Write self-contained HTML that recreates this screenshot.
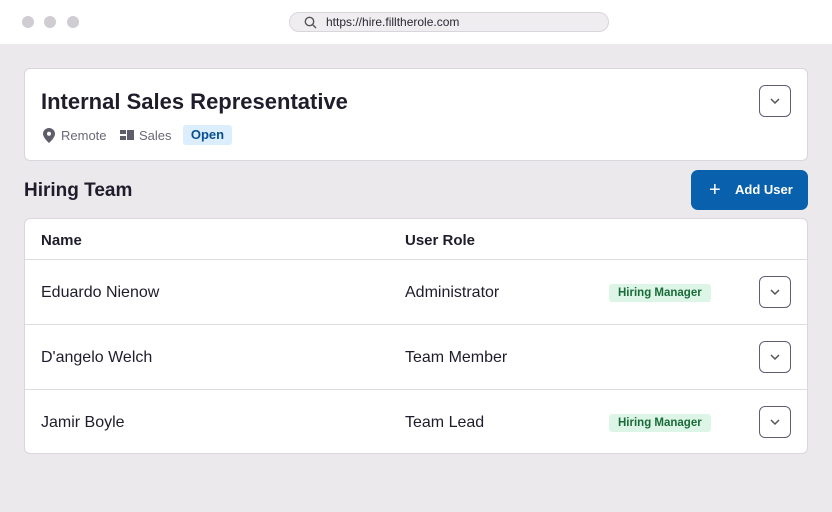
<!DOCTYPE html>
<html><head><style>
*{box-sizing:border-box;margin:0;padding:0}
body{width:832px;height:512px;background:#ebe9ec;font-family:"Liberation Sans",sans-serif;position:relative;overflow:hidden;color:#1f1d2b}
.top{position:absolute;left:0;top:0;width:832px;height:44px;background:#fff}
.dot{position:absolute;top:16px;width:12px;height:12px;border-radius:50%;background:#cfcdd2}
.url{position:absolute;left:289px;top:12px;width:320px;height:20px;border-radius:10px;background:#efedf0;border:1px solid #d8d6da;font-size:12px;color:#2a2833;padding-left:36px;line-height:18px}
.card{position:absolute;background:#fff;border:1px solid #d9d7dc;border-radius:6px}
.chev{position:absolute;width:32px;height:32px;border:1.5px solid #5f5d72;border-radius:6px;background:#fff}
.chev svg{position:absolute;left:9px;top:9px}
.row{position:absolute;left:0;width:783px;height:65px;border-top:1px solid #dedce2;font-size:16px}
.row span{position:absolute;top:24px}
.tag{position:absolute;background:#dcf5e6;color:#1a6b3a;font-size:11.5px;font-weight:bold;border-radius:3px;padding:3px 9px}
</style></head><body>
<div class="top">
<div class="dot" style="left:22px"></div><div class="dot" style="left:44px"></div><div class="dot" style="left:67px"></div>
<div class="url"><svg style="position:absolute;left:14px;top:3px" width="13" height="13" viewBox="0 0 13 13"><circle cx="5.5" cy="5.5" r="4.2" fill="none" stroke="#555" stroke-width="1.4"/><path d="M8.6 8.6L12 12" stroke="#555" stroke-width="1.4"/></svg>https://hire.filltherole.com</div>
</div>
<div class="card" style="left:24px;top:68px;width:784px;height:93px">
<div style="position:absolute;left:16px;top:20px;font-size:22px;font-weight:bold">Internal Sales Representative</div>
<svg style="position:absolute;left:18px;top:59px" width="12" height="15" viewBox="0 0 12 15"><path d="M6 0C2.7 0 0 2.6 0 5.8 0 10 6 15 6 15s6-5 6-9.2C12 2.6 9.3 0 6 0z" fill="#5f5d6a"/><circle cx="6" cy="5.8" r="2" fill="#fff"/></svg>
<span style="position:absolute;left:36px;top:59px;font-size:13px;color:#6b6977">Remote</span>
<svg style="position:absolute;left:95px;top:61px" width="14" height="11"><rect x="0" y="0" width="6" height="4" fill="#5f5d6a"/><rect x="0" y="6" width="6" height="4" fill="#5f5d6a"/><rect x="7" y="0" width="7" height="10" fill="#5f5d6a"/></svg>
<span style="position:absolute;left:114px;top:59px;font-size:13px;color:#6b6977">Sales</span>
<span style="position:absolute;left:158px;top:56px;width:49px;height:20px;background:#dcedfb;border-radius:3px;color:#0a4f8f;font-weight:bold;font-size:13px;text-align:center;line-height:20px">Open</span>
<div class="chev" style="left:734px;top:16px"><svg width="12" height="12"><path d="M2 4l4 4 4-4" fill="none" stroke="#555" stroke-width="1.5"/></svg></div>
</div>
<div style="position:absolute;left:24px;top:180px;font-size:19px;font-weight:bold">Hiring Team</div>
<div style="position:absolute;left:691px;top:170px;width:117px;height:40px;background:#0960ad;border-radius:7px;color:#fff;font-weight:bold;font-size:13px;line-height:40px;padding-left:44px">Add User<span style="position:absolute;left:18px;top:0;font-weight:normal;font-size:20px">+</span></div>
<div class="card" style="left:24px;top:218px;width:784px;height:236px">
<div style="position:absolute;left:16px;top:13px;font-size:15px;font-weight:bold">Name</div>
<div style="position:absolute;left:380px;top:13px;font-size:15px;font-weight:bold">User Role</div>
<div class="row" style="top:40px"><span style="left:16px">Eduardo Nienow</span><span style="left:380px">Administrator</span><div class="tag" style="left:584px;top:24px">Hiring Manager</div><div class="chev" style="left:734px;top:16px"><svg width="12" height="12"><path d="M2 4l4 4 4-4" fill="none" stroke="#555" stroke-width="1.5"/></svg></div></div>
<div class="row" style="top:105px"><span style="left:16px">D'angelo Welch</span><span style="left:380px">Team Member</span><div class="chev" style="left:734px;top:16px"><svg width="12" height="12"><path d="M2 4l4 4 4-4" fill="none" stroke="#555" stroke-width="1.5"/></svg></div></div>
<div class="row" style="top:170px"><span style="left:16px">Jamir Boyle</span><span style="left:380px">Team Lead</span><div class="tag" style="left:584px;top:24px">Hiring Manager</div><div class="chev" style="left:734px;top:16px"><svg width="12" height="12"><path d="M2 4l4 4 4-4" fill="none" stroke="#555" stroke-width="1.5"/></svg></div></div>
</div>
</body></html>
